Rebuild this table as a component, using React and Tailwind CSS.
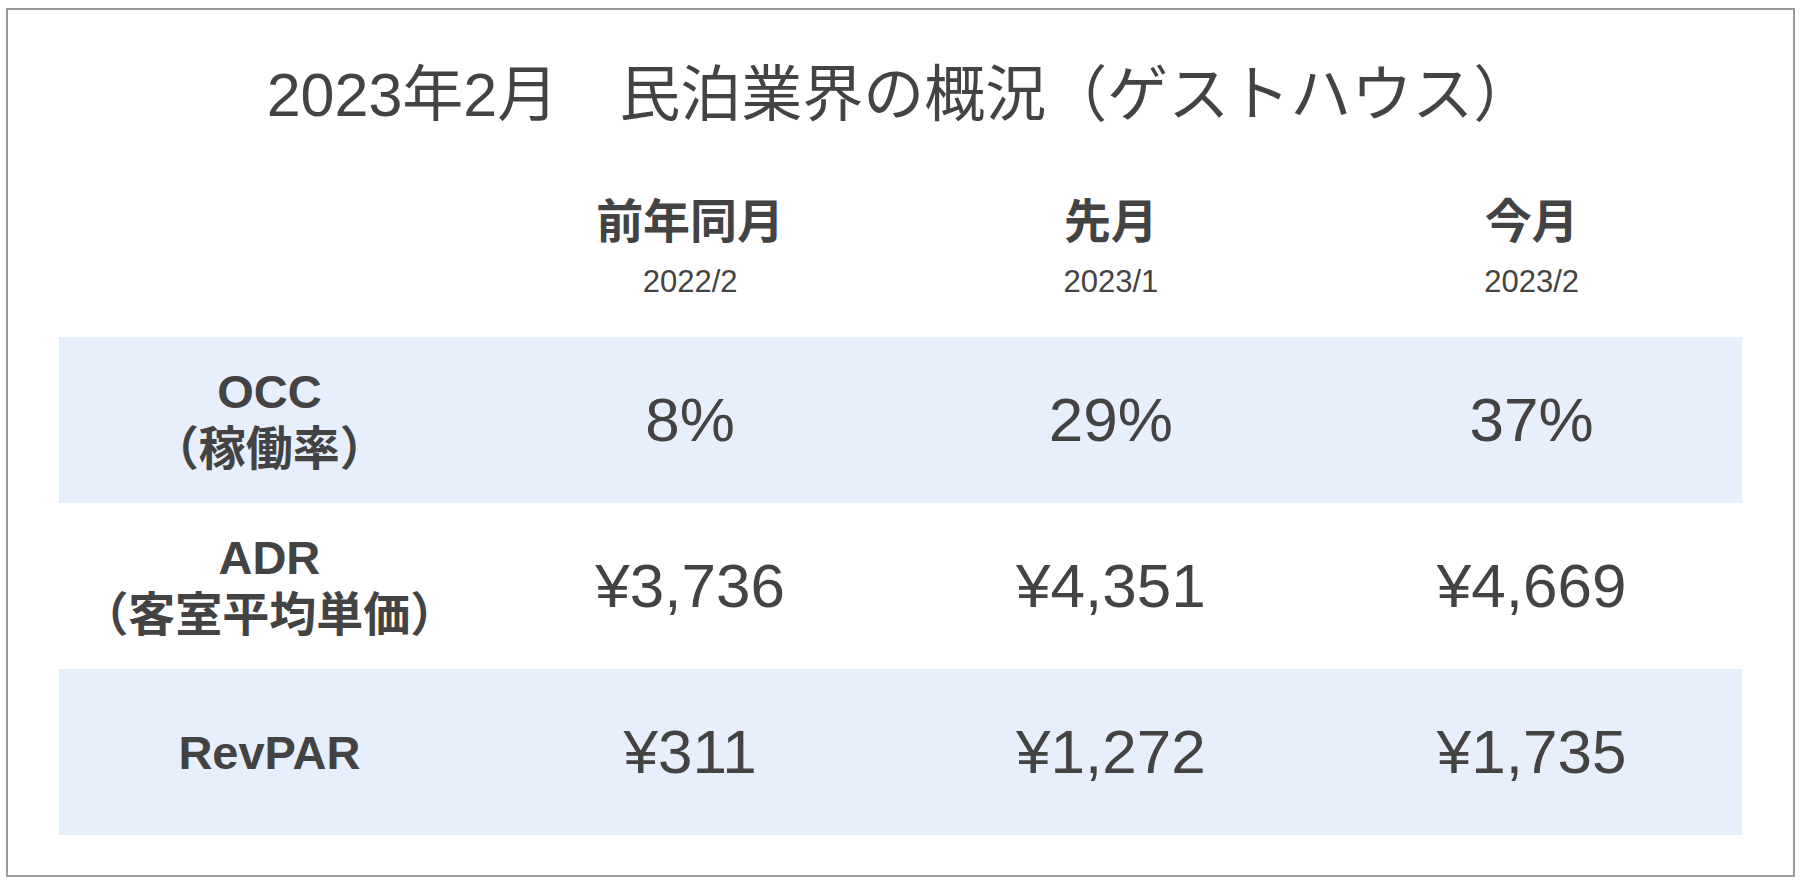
const columns = [
  { label: "前年同月", date: "2022/2" },
  { label: "先月", date: "2023/1" },
  { label: "今月", date: "2023/2" },
];

const rows = [
  { name: "OCC", sub: "（稼働率）", values: ["8%", "29%", "37%"], shaded: true },
  { name: "ADR", sub: "（客室平均単価）", values: ["¥3,736", "¥4,351", "¥4,669"], shaded: false },
  { name: "RevPAR", sub: null, values: ["¥311", "¥1,272", "¥1,735"], shaded: true },
];

const font = { fontFamily: '"Liberation Sans", Arial, "Noto Sans CJK JP", sans-serif' };

export default function App() {
  return (
    <div className="w-[1804px] h-[886px] bg-white pl-[6px] pt-[8px]" style={font}>
      <div className="w-[1789px] h-[869px] border-2 border-[#9a9a9a] px-[51px] text-[#434343]">
        {/* タイトル */}
        <h1 className="pt-[55px] text-center text-[61px] leading-none font-normal whitespace-nowrap">
          2023年2月　民泊業界の概況（ゲストハウス）
        </h1>

        {/* 見出し */}
        <div className="grid grid-cols-4 h-[211px]">
          <div />
          {columns.map((col) => (
            <div key={col.label} className="flex flex-col items-center pt-[72px]">
              <div className="text-[47px] leading-none font-bold">{col.label}</div>
              <div className="mt-[21px] text-[31px] leading-none">{col.date}</div>
            </div>
          ))}
        </div>

        {/* 表 */}
        <div className="flex flex-col">
          {rows.map((row) => (
            <div
              key={row.name}
              className={`grid grid-cols-4 h-[166px] ${row.shaded ? "bg-[#e8effc]" : "bg-white"}`}
            >
              <div className="flex flex-col items-center justify-center font-bold text-[47px] leading-[57px] whitespace-nowrap">
                <div>{row.name}</div>
                {row.sub && <div>{row.sub}</div>}
              </div>
              {row.values.map((v, i) => (
                <div key={i} className="flex items-center justify-center text-[62px] leading-none">
                  {v}
                </div>
              ))}
            </div>
          ))}
        </div>
      </div>
    </div>
  );
}
